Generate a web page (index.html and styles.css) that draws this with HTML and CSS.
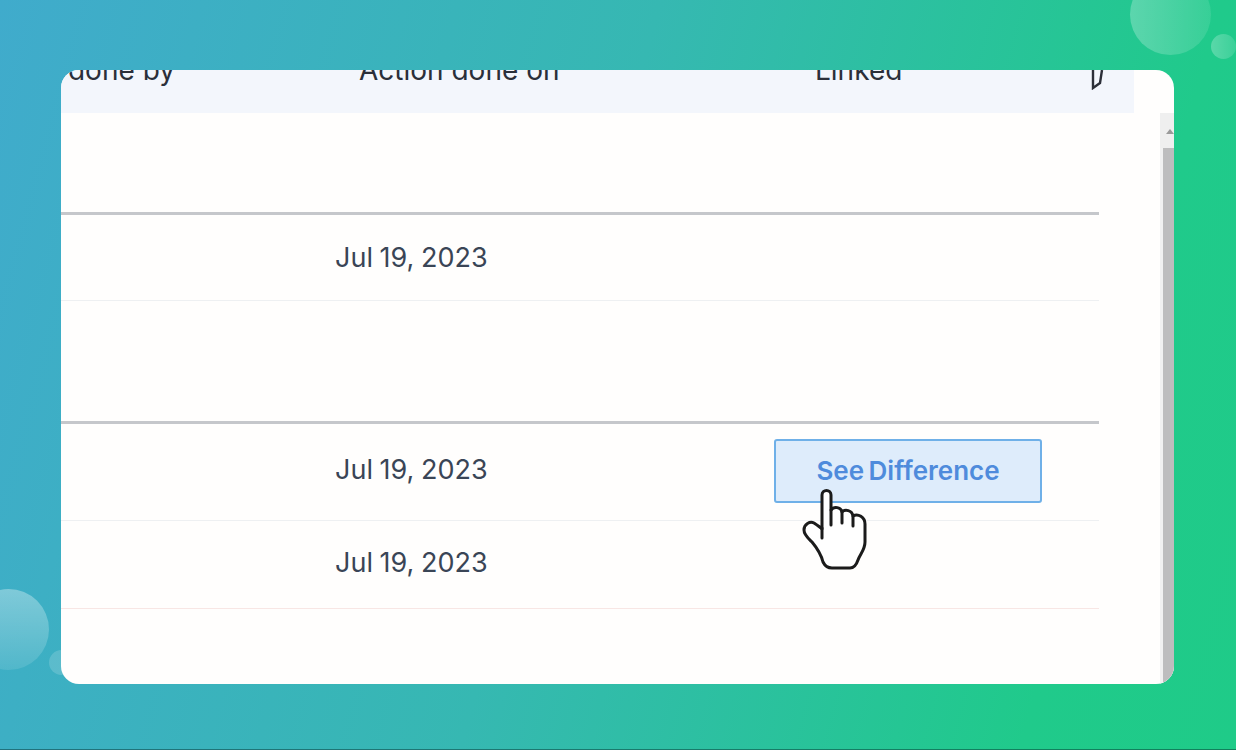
FILE: index.html
```html
<!DOCTYPE html>
<html>
  <head>
    <link rel="stylesheet" href="styles.css">
  </head>

  <body>
    <div class="bubble bubble-top"></div>
    <div class="bubble bubble-top-small"></div>
    <div class="bubble bubble-left"></div>
    <div class="bubble bubble-left-small"></div>

    <div class="card">
      <div class="head">
        <div class="head-cell head-first"><span>Action done by</span></div>
        <div class="head-cell">Action done on</div>
        <div class="head-cell">Linked</div>
        <svg class="filter-icon" width="14" height="20" viewBox="0 0 14 20">
          <path d="M2 0V18L9 13L11 0" fill="none" stroke="#2c2f38" stroke-width="2.4"/>
        </svg>
      </div>

      <div class="body">
        <div class="rows">
          <div class="row row-strong h-102"></div>
          <div class="row h-86"><span class="date">Jul 19, 2023</span></div>
          <div class="row row-strong h-123"></div>
          <div class="row h-97">
            <span class="date date-raised">Jul 19, 2023</span>
            <button class="diff">See Difference</button>
          </div>
          <div class="row row-pink h-88"><span class="date date-raised">Jul 19, 2023</span></div>
        </div>
        <div class="scrollbar">
          <div class="scroll-top"><div class="scroll-arrow"></div></div>
          <div class="scroll-thumb"></div>
        </div>
      </div>
    </div>

    <svg class="hand" width="90" height="100" viewBox="0 0 90 100">
      <path d="M32 49V15C32 9 41 9 41 15V30C44 26 51 27 52 32C55 29 62 30 63 36C68 33 75 37 75 44V62C75 70 70 74 68 80C66 86 63 88 60 88H42C37 88 35 86 33 82C31 74 27 68 22 62C18 58 14 55 14 50C14 44 20 41 24 43C27 45 30 47 32 49Z" fill="#fff" stroke="#1b1b1b" stroke-width="3" stroke-linejoin="round"/>
      <path d="M32 48V58M41 30V45M52 32V43M63 36V46" fill="none" stroke="#1b1b1b" stroke-width="3" stroke-linecap="round"/>
    </svg>

    <div class="bottom-line"></div>
  </body>
</html>
```

FILE: styles.css
```css
html, body {
  margin: 0;
  height: 100%;
}

body {
  position: relative;
  overflow: hidden;
  box-sizing: border-box;
  padding: 70px 62px 0 61px;
  background: linear-gradient(105deg, #40abcc 0%, #36b8b2 46%, #20ca8b 85%, #1fcb88 100%);
  font-family: Inter, "Liberation Sans", sans-serif;
}

.card {
  position: relative;
  height: 614px;
  overflow: hidden;
  border-radius: 18px;
  background: #fffefd;
}

.head {
  display: grid;
  grid-template-columns: 298px 456px 276px 43px;
  grid-template-rows: 43px;
  align-items: end;
  width: 1073px;
  height: 43px;
  background: #f3f6fc;
  color: #2b2f3a;
  font-size: 28px;
  line-height: 30px;
}

.head-cell {
  margin-bottom: 28px;
  white-space: nowrap;
}

.head-first {
  display: flex;
  justify-content: flex-end;
  width: 114px;
}

.filter-icon {
  align-self: start;
}

.body {
  display: flex;
  justify-content: space-between;
}

.rows {
  width: 1038px;
}

.row {
  display: grid;
  grid-template-columns: 274px 439px 268px;
  align-items: center;
  box-sizing: border-box;
  border-bottom: 1px solid #eef0f2;
}

.row-strong {
  border-bottom: 3px solid #c5c7cb;
}

.row-pink {
  border-bottom-color: #f8e6e4;
}

.h-86 { height: 86px; }
.h-88 { height: 88px; }
.h-97 { height: 97px; }
.h-102 { height: 102px; }
.h-123 { height: 123px; }

.date {
  grid-column: 2;
  color: #3a4556;
  font-size: 27px;
  line-height: 34px;
  word-spacing: -1px;
}

.date-raised {
  margin-bottom: 4px;
}

.diff {
  grid-column: 3;
  height: 64px;
  margin-bottom: 3px;
  border: 2px solid #6fb0e8;
  border-radius: 3px;
  background: #deecfb;
  color: #4f8bdc;
  font-family: inherit;
  font-size: 26px;
  font-weight: 600;
  word-spacing: -2px;
}

.scrollbar {
  width: 14px;
  height: 571px;
  background: #f1f1f1;
}

.scroll-top {
  display: flex;
  align-items: flex-end;
  justify-content: flex-end;
  height: 35px;
  background: #efefef;
}

.scroll-arrow {
  width: 0;
  height: 0;
  margin-bottom: 14px;
  border: 4px solid transparent;
  border-top: 0;
  border-bottom: 5px solid #9a9a9a;
}

.scroll-thumb {
  height: 536px;
  margin-left: 3px;
  background: #bdbdbe;
}

.bubble {
  position: absolute;
  border-radius: 50%;
}

.bubble-top {
  left: 1130px;
  top: -26px;
  width: 81px;
  height: 81px;
  background: linear-gradient(90deg, rgba(255, 255, 255, 0.26), rgba(255, 255, 255, 0.1));
}

.bubble-top-small {
  left: 1211px;
  top: 34px;
  width: 25px;
  height: 25px;
  background: linear-gradient(90deg, rgba(255, 255, 255, 0.26), rgba(255, 255, 255, 0.12));
}

.bubble-left {
  left: -32px;
  top: 589px;
  width: 81px;
  height: 81px;
  background: linear-gradient(180deg, rgba(255, 255, 255, 0.34), rgba(255, 255, 255, 0.1));
}

.bubble-left-small {
  left: 49px;
  top: 650px;
  width: 25px;
  height: 25px;
  background: rgba(255, 255, 255, 0.16);
}

.hand {
  position: absolute;
  left: 790px;
  top: 480px;
}

.bottom-line {
  position: absolute;
  left: 0;
  right: 0;
  bottom: 0;
  height: 1px;
  background: rgba(0, 40, 40, 0.45);
}
```
